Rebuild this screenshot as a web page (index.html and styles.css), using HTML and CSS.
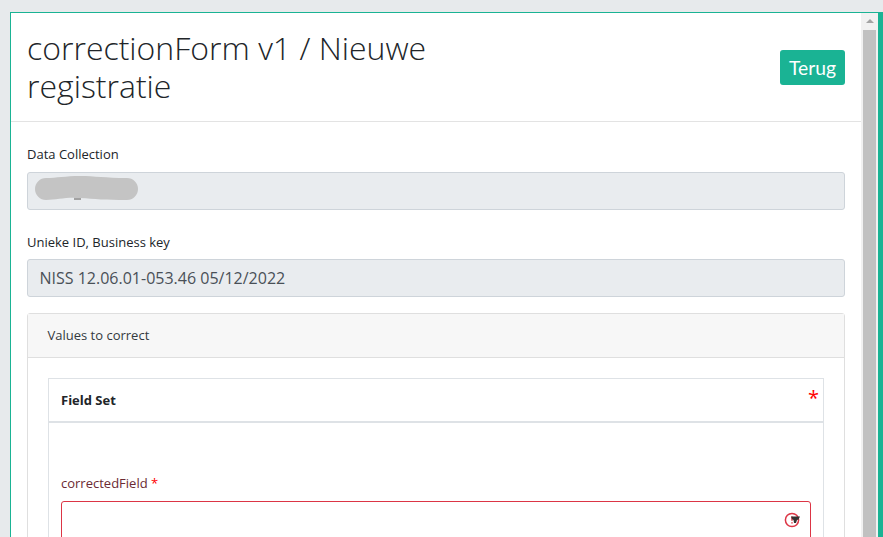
FILE: index.html
```html
<!DOCTYPE html>
<html lang="en">
<head>
  <meta charset="UTF-8">
  <title>correctionForm v1 / Nieuwe registratie</title>
  <link rel="stylesheet" href="styles.css">
</head>
<body>

<div class="modal">
  <div class="modal-main">
    <div class="modal-header">
      <h1 class="modal-title">correctionForm v1 / Nieuwe registratie</h1>
      <a class="btn-back">Terug</a>
    </div>

    <div class="modal-body">
      <div class="form-group">
        <label class="form-label">Data Collection</label>
        <div class="form-control">
          <!-- painted-over value -->
          <svg class="redacted" width="104" height="26" viewBox="0 0 104 26">
            <path d="M39 21.500h7v2.500h-7z" fill="#a2a2a2"/>
            <path d="M11 2C22 2 30 0 45 0S70 2 92 2a11 11 0 0 1 0 22C70 24 60 23 45 22S22 24 11 24A11 11 0 0 1 11 2z" fill="#c4c4c4"/>
          </svg>
        </div>
      </div>

      <div class="form-group">
        <label class="form-label">Unieke ID, Business key</label>
        <div class="form-control">NISS 12.06.01-053.46 05/12/2022</div>
      </div>

      <div class="card">
        <div class="card-header">Values to correct</div>
        <div class="card-body">
          <div class="field-set">
            <div class="field-set-header">
              <strong>Field Set</strong>
              <span class="field-set-star">*</span>
            </div>
            <div class="field-set-body">
              <label class="field-label">correctedField <span class="required">*</span></label>
              <div class="input-invalid">
                <!-- error icon with the mouse pointer on top of it -->
                <svg class="invalid-icon" width="18" height="18" viewBox="0 0 18 18">
                  <circle cx="8" cy="9" r="6.600" fill="none" stroke="#dc3545" stroke-width="1.500"/>
                  <path d="M8 5.500v4.200M8 11.200v1.400" stroke="#dc3545" stroke-width="1.500" fill="none"/>
                  <path d="M7 5.500h9l-1.500 3-1.500.5-1 3h-2l-.5-3-1.500-1z" fill="#333"/>
                </svg>
              </div>
            </div>
          </div>
        </div>
      </div>
    </div>
  </div>

  <div class="scrollbar">
    <span class="scroll-up"></span>
    <span class="scroll-thumb"></span>
  </div>
</div>

</body>
</html>
```

FILE: styles.css
```css
html, body {
  height: 100%;
  overflow: hidden;
}

body {
  margin: 0;
  padding: 12px 0 0 10px;
  box-sizing: border-box;
  background: #e7eaec;
  font-family: 'Open Sans', sans-serif;
  font-size: 13px;
  color: #212529;
}

.modal {
  display: flex;
  height: 100%;
  background: #fff;
  border-top: 1px solid #1ab394;
  border-left: 1px solid #1ab394;
  border-right: 5px solid #1ab394;
  overflow: hidden;
}

.modal-main {
  flex: 1;
  min-width: 0;
}

.modal-header {
  display: flex;
  justify-content: space-between;
  align-items: center;
  height: 109px;
  box-sizing: border-box;
  padding: 0 16px;
  border-bottom: 1px solid #e3e3e3;
}

.modal-title {
  margin: 0;
  width: 420px;
  font-size: 32px;
  font-weight: 300;
  line-height: 38px;
  color: #212529;
}

.btn-back {
  width: 65px;
  text-align: center;
  height: 35px;
  line-height: 35px;
  background: #1ab394;
  border-radius: 3px;
  font-family: 'Lato', sans-serif;
  font-size: 19.300px;
  color: #fff;
}

.modal-body {
  padding: 23px 16px 0;
}

.form-group {
  margin-bottom: 22px;
}

.form-group + .form-group {
  margin-bottom: 16px;
}

.form-label {
  display: block;
  height: 18px;
  line-height: 18px;
  margin-bottom: 9px;
}

.form-group + .form-group .form-label {
  padding-top: 1px;
  margin-bottom: 8px;
}

.form-control {
  position: relative;
  height: 38px;
  box-sizing: border-box;
  padding: 0 11.500px;
  line-height: 36px;
  background: #e9ecef;
  border: 1px solid #ced4da;
  border-radius: 3px;
  font-size: 16px;
  color: #495057;
}

.redacted {
  position: absolute;
  left: 7px;
  top: 3px;
}

.card {
  border: 1px solid #dfdfdf;
  border-radius: 3px;
}

.card-header {
  height: 43px;
  line-height: 43px;
  padding: 0 19.500px;
  background: #f7f7f7;
  border-bottom: 1px solid #dfdfdf;
  color: #343a40;
}

.card-body {
  padding: 20px;
}

.field-set {
  border: 1px solid #dee2e6;
  border-bottom: 0;
}

.field-set-header {
  position: relative;
  height: 42px;
  line-height: 42px;
  padding: 0 12px;
  border-bottom: 2px solid #dee2e6;
}

.field-set-star {
  position: absolute;
  right: 4px;
  top: 6px;
  font-size: 20px;
  line-height: 26px;
  color: #f00;
}

.field-set-body {
  padding: 51px 12px 0;
}

.field-label {
  display: block;
  height: 18px;
  line-height: 18px;
  margin-bottom: 9px;
  color: #6b2a33;
}

.required {
  color: #f00;
}

.input-invalid {
  display: flex;
  justify-content: flex-end;
  height: 60px;
  padding: 9px 8px 0 0;
  border: 1px solid #dc3545;
  border-radius: 3px;
}

.scrollbar {
  flex: none;
  width: 17px;
  display: flex;
  flex-direction: column;
  align-items: center;
  background: #f1f1f1;
}

.scroll-up {
  margin-top: 6px;
  border-left: 4px solid transparent;
  border-right: 4px solid transparent;
  border-bottom: 4px solid #a3a3a3;
}

.scroll-thumb {
  margin-top: 7px;
  width: 13px;
  flex: 1;
  background: #c1c1c1;
}
```
